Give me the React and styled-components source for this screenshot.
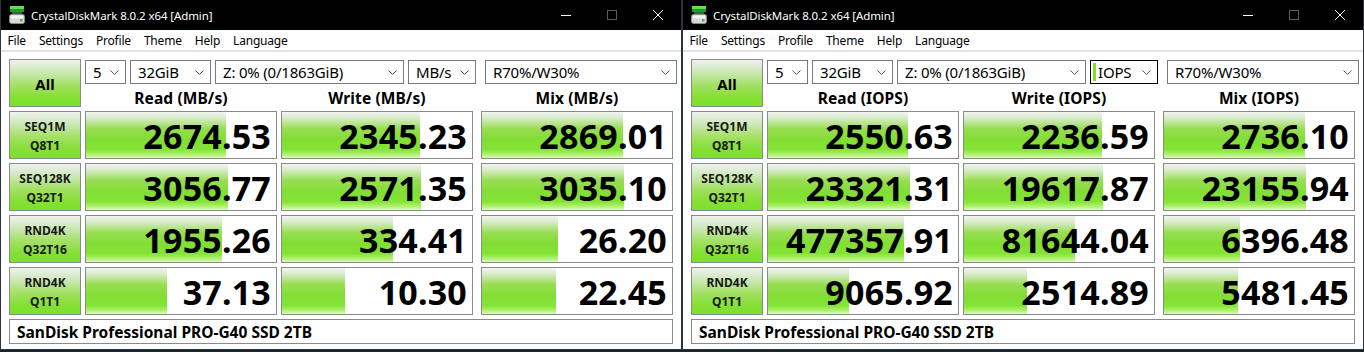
import styled, { createGlobalStyle } from "styled-components";

const GlobalStyle = createGlobalStyle`
  html, body { margin: 0; padding: 0; }
  body {
    background: #1c2530;
    font-family: "Noto Sans", "Open Sans", sans-serif;
  }
`;

const results = [
  { label: ["SEQ1M", "Q8T1"], mb: [2674.53, 2345.23, 2869.01], iops: [2550.63, 2236.59, 2736.1] },
  { label: ["SEQ128K", "Q32T1"], mb: [3056.77, 2571.35, 3035.1], iops: [23321.31, 19617.87, 23155.94] },
  { label: ["RND4K", "Q32T16"], mb: [1955.26, 334.41, 26.2], iops: [477357.91, 81644.04, 6396.48] },
  { label: ["RND4K", "Q1T1"], mb: [37.13, 10.3, 22.45], iops: [9065.92, 2514.89, 5481.45] },
];

// bar length is log scaled from the MB/s value, even in IOPS mode
const barWidth = (mb) => Math.max(0, Math.round(31 + 31.8 * Math.log10(mb)));

const Desktop = styled.div`
  display: flex;
  width: 1364px;
  height: 352px;
  overflow: hidden;
`;

const Window = styled.div`
  width: 682px;
  height: 350px;
  box-sizing: border-box;
  border: 1px solid #2b333d;
  border-top: none;
  background: #ffffff;
  display: flex;
  flex-direction: column;
`;

const TitleBar = styled.div`
  height: 30px;
  flex-shrink: 0;
  background: #000;
  display: flex;
  align-items: center;
  color: #fff;
  font-size: 11.5px;
`;

const TitleText = styled.span`
  margin-left: 6px;
  letter-spacing: -0.1px;
`;

const Controls = styled.div`
  margin-left: auto;
  display: flex;
  height: 30px;
`;

const CtrlButton = styled.div`
  width: 46px;
  height: 30px;
  display: flex;
  align-items: center;
  justify-content: center;
`;

const MenuBar = styled.div`
  height: 19px;
  padding-top: 1px;
  flex-shrink: 0;
  display: flex;
  align-items: center;
  border-bottom: 2px solid #e3e3e3;
  font-size: 12px;
  color: #000;
`;

const MenuItem = styled.span`
  padding: 0 6.5px;
  letter-spacing: -0.2px;
`;

const Client = styled.div`
  flex: 1;
  display: flex;
  flex-direction: column;
  padding: 7px 0 0 8px;
`;

const Top = styled.div`
  display: flex;
  gap: 4px;
`;

const green = `linear-gradient(180deg, #eef2ec 0%, #d2e9c2 22%, #a3e064 55%, #86df36 80%, #7ee12a 100%)`;

const AllButton = styled.div`
  width: 72px;
  height: 48px;
  box-sizing: border-box;
  border: 1px solid #8a8a8a;
  background: ${green};
  display: flex;
  align-items: center;
  justify-content: center;
  padding-top: 2px;
  font-weight: 700;
  font-size: 15px;
  color: #000;
`;

const TopRight = styled.div`
  width: 592px;
  display: flex;
  flex-direction: column;
`;

const SelectRow = styled.div`
  display: flex;
  gap: 4px;
  margin-top: 1px;
  height: 24px;
`;

const Select = styled.div`
  width: ${(p) => p.$w}px;
  margin-left: ${(p) => p.$ml || 0}px;
  height: 24px;
  box-sizing: border-box;
  border: 1px solid ${(p) => (p.$focus ? "#000" : "#7a7a7a")};
  background: #fff;
  display: flex;
  align-items: center;
  padding: 0 6px 0 ${(p) => (p.$focus ? 2 : 7)}px;
  font-size: 15px;
  color: #000;
  white-space: nowrap;
  letter-spacing: -0.2px;
`;

const SelectText = styled.span`
  flex: 1;
  overflow: hidden;
`;

const Caret = styled.span`
  width: 3px;
  height: 18px;
  background: #7ee02c;
  margin-right: 2px;
`;

const HeaderRow = styled.div`
  display: grid;
  grid-template-columns: 192px 196px 196px;
  column-gap: 4px;
  height: 23px;
  align-items: end;
`;

const Header = styled.div`
  width: 192px;
  text-align: center;
  font-weight: 700;
  font-size: 15.5px;
  line-height: 17px;
  color: #000;
  letter-spacing: 0.1px;
`;

const Grid = styled.div`
  display: grid;
  grid-template-columns: 72px 192px 196px 196px;
  grid-auto-rows: 48px;
  column-gap: 4px;
  row-gap: 4px;
  margin-top: 4px;
`;

const Label = styled.div`
  box-sizing: border-box;
  border: 1px solid #8a8a8a;
  background: ${green};
  display: flex;
  flex-direction: column;
  align-items: center;
  justify-content: center;
  padding-top: 1px;
  font-weight: 700;
  font-size: 12px;
  line-height: 19px;
  color: #1a1a1a;
`;

const Value = styled.div`
  width: 192px;
  box-sizing: border-box;
  border: 1px solid #8a8a8a;
  background-color: #fff;
  background-image: linear-gradient(180deg, #f3f5f2 0%, #d6ebc6 14%, #98dd52 36%, #82de34 60%, #84e436 82%, #b8f47e 94%, #dcfac2 100%);
  background-repeat: no-repeat;
  display: flex;
  align-items: center;
  justify-content: flex-end;
  padding: 2px 5px 0 0;
  font-weight: 700;
  font-size: 34px;
  line-height: 1;
  color: #000;
  letter-spacing: 0.2px;
`;

const Footer = styled.div`
  grid-column: 1 / -1;
  width: 664px;
  height: 25px;
  box-sizing: border-box;
  border: 1px solid #8a8a8a;
  display: flex;
  align-items: center;
  padding: 1px 0 0 7px;
  font-weight: 700;
  font-size: 15.5px;
  color: #000;
`;

function AppIcon() {
  return (
    <svg width="16" height="18" viewBox="0 0 16 18" style={{ marginLeft: 8 }}>
      <rect x="1" y="0" width="14" height="3" fill="#5fe04a" />
      <rect x="1" y="3" width="14" height="3" fill="#1e9a2a" />
      <rect x="3" y="6" width="10" height="2" fill="#2f6a34" />
      <rect x="0.5" y="8.5" width="15" height="9" rx="2" fill="#d8d8d8" stroke="#8a8a8a" />
      <rect x="2" y="9.5" width="12" height="3" rx="1" fill="#f4f4f4" />
      <rect x="11" y="13" width="2.5" height="2.5" fill="#3fc03a" />
    </svg>
  );
}

function Chevron() {
  return (
    <svg width="9" height="5" viewBox="0 0 9 5">
      <polyline points="0.5,0.5 4.5,4.5 8.5,0.5" fill="none" stroke="#5a5a5a" strokeWidth="1" />
    </svg>
  );
}

function WindowControls() {
  return (
    <Controls>
      <CtrlButton>
        <svg width="10" height="10"><line x1="0" y1="5.5" x2="10" y2="5.5" stroke="#fff" /></svg>
      </CtrlButton>
      <CtrlButton>
        <svg width="10" height="10"><rect x="0.5" y="0.5" width="9" height="9" fill="none" stroke="#5c5c5c" /></svg>
      </CtrlButton>
      <CtrlButton>
        <svg width="10" height="10">
          <line x1="0" y1="0" x2="10" y2="10" stroke="#fff" />
          <line x1="10" y1="0" x2="0" y2="10" stroke="#fff" />
        </svg>
      </CtrlButton>
    </Controls>
  );
}

function DiskMark({ unit }) {
  const iops = unit === "IOPS";
  const suffix = iops ? "(IOPS)" : "(MB/s)";
  const selects = [
    { w: 41, text: "5" },
    { w: 81, text: "32GiB" },
    { w: 189, text: "Z: 0% (0/1863GiB)" },
    { w: 68, text: unit, focus: iops },
    { w: 192, text: "R70%/W30%", ml: 5 },
  ];
  return (
    <Window>
      <TitleBar>
        <AppIcon />
        <TitleText>CrystalDiskMark 8.0.2 x64 [Admin]</TitleText>
        <WindowControls />
      </TitleBar>
      <MenuBar>
        {["File", "Settings", "Profile", "Theme", "Help", "Language"].map((m) => (
          <MenuItem key={m}>{m}</MenuItem>
        ))}
      </MenuBar>
      <Client>
        <Top>
          <AllButton>All</AllButton>
          <TopRight>
            <SelectRow>
              {selects.map((s) => (
                <Select key={s.text} $w={s.w} $ml={s.ml} $focus={s.focus}>
                  {s.focus && <Caret />}
                  <SelectText>{s.text}</SelectText>
                  <Chevron />
                </Select>
              ))}
            </SelectRow>
            <HeaderRow>
              <Header>Read {suffix}</Header>
              <Header>Write {suffix}</Header>
              <Header>Mix {suffix}</Header>
            </HeaderRow>
          </TopRight>
        </Top>
        <Grid>
          {results.map((r) => [
            <Label key={r.label.join()}>
              <span>{r.label[0]}</span>
              <span>{r.label[1]}</span>
            </Label>,
            ...r.mb.map((mb, i) => (
              <Value key={r.label.join() + i} style={{ backgroundSize: `${barWidth(mb)}px 100%` }}>
                {(iops ? r.iops[i] : mb).toFixed(2)}
              </Value>
            )),
          ])}
          <Footer>SanDisk Professional PRO-G40 SSD 2TB</Footer>
        </Grid>
      </Client>
    </Window>
  );
}

export default function App() {
  return (
    <>
      <GlobalStyle />
      <Desktop>
        <DiskMark unit="MB/s" />
        <DiskMark unit="IOPS" />
      </Desktop>
    </>
  );
}
